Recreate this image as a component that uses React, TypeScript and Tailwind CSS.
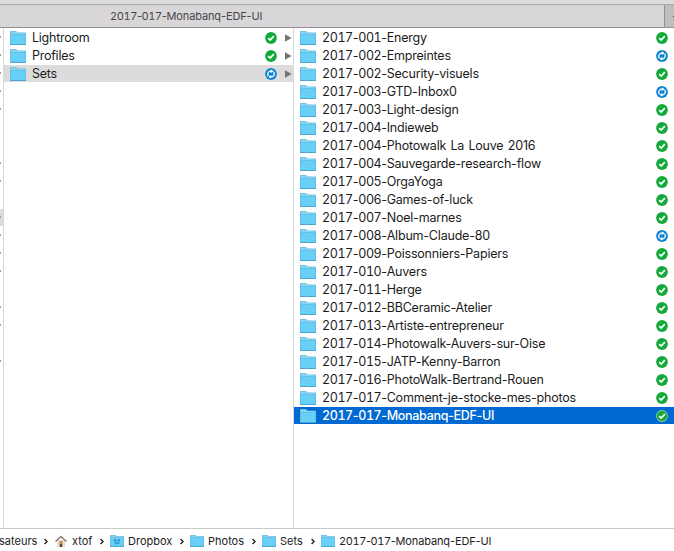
import React from 'react';

type Status = 'ok' | 'sync';

const sets: [string, Status][] = [
  ['2017-001-Energy', 'ok'],
  ['2017-002-Empreintes', 'sync'],
  ['2017-002-Security-visuels', 'ok'],
  ['2017-003-GTD-Inbox0', 'sync'],
  ['2017-003-Light-design', 'ok'],
  ['2017-004-Indieweb', 'ok'],
  ['2017-004-Photowalk La Louve 2016', 'ok'],
  ['2017-004-Sauvegarde-research-flow', 'ok'],
  ['2017-005-OrgaYoga', 'ok'],
  ['2017-006-Games-of-luck', 'ok'],
  ['2017-007-Noel-marnes', 'ok'],
  ['2017-008-Album-Claude-80', 'sync'],
  ['2017-009-Poissonniers-Papiers', 'ok'],
  ['2017-010-Auvers', 'ok'],
  ['2017-011-Herge', 'ok'],
  ['2017-012-BBCeramic-Atelier', 'ok'],
  ['2017-013-Artiste-entrepreneur', 'ok'],
  ['2017-014-Photowalk-Auvers-sur-Oise', 'ok'],
  ['2017-015-JATP-Kenny-Barron', 'ok'],
  ['2017-016-PhotoWalk-Bertrand-Rouen', 'ok'],
  ['2017-017-Comment-je-stocke-mes-photos', 'ok'],
  ['2017-017-Monabanq-EDF-UI', 'ok'],
];

const ticks = [0, 1, 2, 3, 4, 7, 8, 10, 11, 12, 13, 15, 16, 18];

function Folder({ small = false, dropbox = false }: { small?: boolean; dropbox?: boolean }) {
  return (
    <svg className={small ? 'block h-[12px] w-[14px] shrink-0' : 'block h-[14px] w-[16px] shrink-0'} viewBox="0 0 16 14" preserveAspectRatio="none">
      <path d="M0 14V1Q0 0 1 0H6L7.4 1.5H15Q16 1.5 16 2.5V14Z" fill="#58b4dc" />
      <path d="M.6 1Q.6.6 1 .6H5.8L7.2 2H15.4V3H.6Z" fill="#8bd4ef" />
      <path d="M.5 3.5H15.5V13H.5Z" fill="#68cff7" />
      <path d="M0 13H16V14H0Z" fill="#4ba5cc" />
      {dropbox && <path d="M5.5 4.5 8 6 10.5 4.5 12 6.2 10.3 7.8 11.5 9.3 8 11.5 4.5 9.3 5.7 7.8 4 6.2ZM8 6.3 6.3 7.8 8 9.2 9.7 7.8Z" fill="#319bd0" fillRule="evenodd" />}
    </svg>
  );
}

function Badge({ status, ring = false }: { status: Status; ring?: boolean }) {
  return (
    <svg className="h-[12px] w-[12px] shrink-0" viewBox="0 0 12 12" fill="none">
      <circle cx="6" cy="6" r="5.9" fill={status === 'ok' ? (ring ? '#8ccda9' : '#1cab40') : '#0b83d3'} />
      {status === 'ok' ? (
        <>
          <circle cx="6" cy="6" r="5.1" fill="#12a83a" />
          <path d="M3.2 6.2 5.2 8.1 8.8 4.2" stroke="white" strokeWidth="1.7" />
        </>
      ) : (
        <g transform="rotate(18 6 6)">
          <path d="M4.2 9A3.4 3.4 0 0 1 3.6 4.1Q4.5 3 6.2 3M7.8 3A3.4 3.4 0 0 1 8.4 7.9Q7.5 9 5.8 9" stroke="white" strokeWidth="1.3" />
          <path d="M5.3 1.2 7.4 3.1 5.1 5.3ZM6.7 10.8 4.6 8.9 6.9 6.7Z" fill="white" />
        </g>
      )}
    </svg>
  );
}

function Arrow() {
  return <svg className="block h-[8px] w-[7px]" viewBox="0 0 7 8"><path d="M0 .3 6.7 4 0 7.7Z" fill="#757575" /></svg>;
}

function Chevron() {
  return <svg className="h-[7px] w-[4px] shrink-0" viewBox="0 0 4 7" fill="none"><path d="M.6 1 3.1 3.5.6 6" stroke="#222" strokeWidth="1.4" /></svg>;
}

/** File name with fixed-width digits in its year and number. */
function FileName({ name }: { name: string }) {
  return (
    <>
      <span className="tracking-[-0.4px]">
        <span className="tabular-nums">{name.slice(0, 4)}</span>-<span className="tabular-nums">{name.slice(5, 8)}</span>-
      </span>
      {name.slice(9)}
    </>
  );
}

export default function App() {
  return (
    <div className="flex h-[551px] w-[674px] flex-col overflow-hidden bg-white font-['Inter',sans-serif] text-[12.5px] text-[#1c1c1c]">
      <div className="h-[4px] shrink-0 bg-[#dddbdd]" />
      <header className="flex h-[24px] shrink-0 border-y border-t-[#aaa8aa] border-b-[#929092] bg-[#d8d6d8] text-[11px] text-[#484648]">
        <div className="flex w-[664px] items-center pl-[110px] leading-[22px]"><span className="tracking-[-0.12px] whitespace-nowrap"><FileName name="2017-017-Monabanq-EDF-UI" /></span></div>
        <div className="flex flex-1 items-center justify-end border-l border-[#929092] bg-[#bfbdbf]"><i className="h-px w-px bg-[#555]" /></div>
      </header>
      <main className="flex h-[500px] shrink-0">
        <div className="w-[4px] border-r border-[#d9d9d9] pt-px">
          {Array.from({ length: 19 }, (_, i) => (
            <div key={i} className={`mb-px flex h-[17px] pt-[7px] ${i === 10 ? 'bg-[#dcdcdc]' : ''}`}>
              {ticks.includes(i) && <i className="h-[2px] w-px bg-[#a0a0a0]" />}
            </div>
          ))}
        </div>
        <div className="w-[290px] border-r border-[#d9d9d9] pt-px">
          {['Lightroom', 'Profiles', 'Sets'].map((name, i) => (
            <div key={name} className={`mb-px flex h-[17px] items-center pl-[6px] pr-px leading-[17px] ${i === 2 ? 'bg-[#dcdcdc]' : ''}`}>
              <Folder />
              <span className="ml-[6px] flex-1 tracking-[-0.25px]">{name}</span>
              <Badge status={i === 2 ? 'sync' : 'ok'} />
              <span className="ml-[8px]"><Arrow /></span>
            </div>
          ))}
        </div>
        <div className="flex-1 pt-px">
          {sets.map(([name, status], i) => (
            <div key={name} className={`mb-px flex h-[17px] items-center pl-[6px] pr-[6px] leading-[17px] ${i === 21 ? 'bg-[#0069d2] font-medium tracking-[-0.3px] text-white' : 'tracking-[-0.2px]'}`}>
              <Folder />
              <span className="ml-[6px] flex-1 [word-spacing:1px] whitespace-nowrap"><FileName name={name} /></span>
              <Badge status={status} ring={i === 21} />
            </div>
          ))}
        </div>
      </main>
      <footer className="flex h-[23px] items-center border-t border-[#cacaca] pt-[2px] text-[11px] leading-[18px] whitespace-nowrap">
        <span className="-ml-px w-[45px] shrink-0">sateurs</span>
        <Chevron />
        <svg className="ml-[7px] h-[12px] w-[12px] shrink-0" viewBox="0 0 12 12"><path d="M2 5H10V12H2Z" fill="#e0ddda" /><path d="M0 6 6 .5 12 6 11 7 6 2.5 1 7Z" fill="#8b7970" /><path d="M4.5 6H7.5V12H4.5Z" fill="#d58a3c" /><path d="M5 9H7V12H5Z" fill="#514943" /></svg>
        <span className="ml-[5px] w-[28px] shrink-0">xtof</span>
        <Chevron />
        <span className="ml-[6px]"><Folder small dropbox /></span>
        <span className="ml-[4px] w-[52px] shrink-0">Dropbox</span>
        <Chevron />
        <span className="ml-[6px]"><Folder small /></span>
        <span className="ml-[4px] w-[44px] shrink-0">Photos</span>
        <Chevron />
        <span className="ml-[6px]"><Folder small /></span>
        <span className="ml-[4px] w-[31px] shrink-0">Sets</span>
        <Chevron />
        <span className="ml-[6px]"><Folder small /></span>
        <span className="ml-[4px] tracking-[-0.12px]"><FileName name="2017-017-Monabanq-EDF-UI" /></span>
      </footer>
    </div>
  );
}
